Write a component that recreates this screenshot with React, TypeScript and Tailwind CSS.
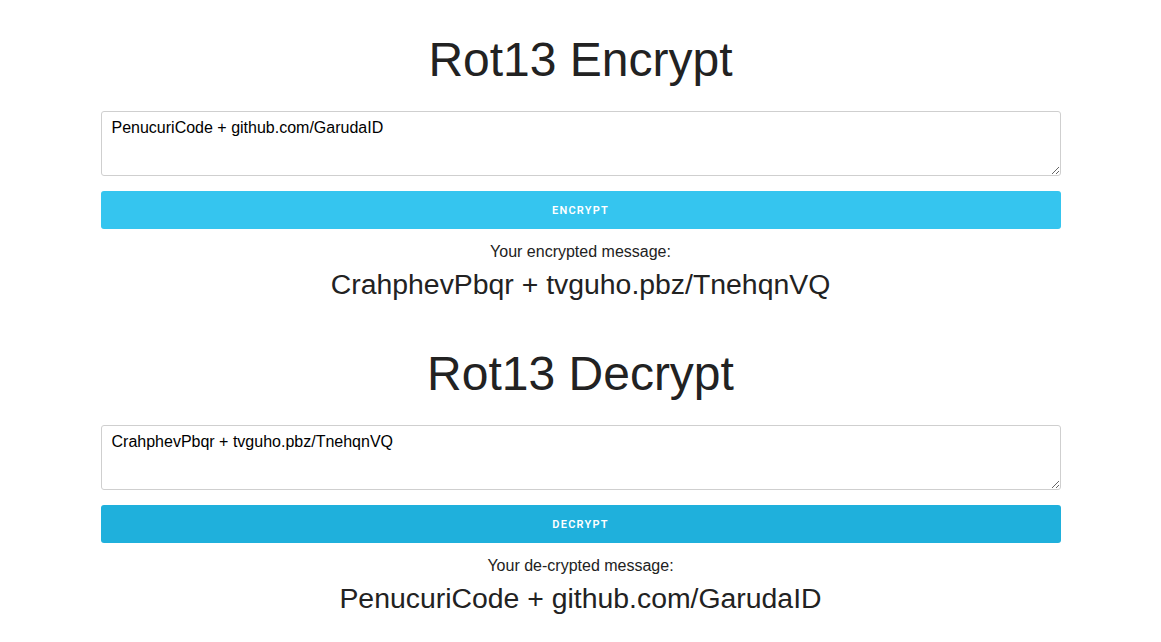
import React, { useState } from 'react';

function rot13(s: string) {
  return s.replace(/[a-zA-Z]/g, (c) => {
    const base = c <= 'Z' ? 65 : 97;
    return String.fromCharCode(((c.charCodeAt(0) - base + 13) % 26) + base);
  });
}

function Section({
  title,
  initial,
  button,
  label,
  btnClass,
}: {
  title: string;
  initial: string;
  button: string;
  label: string;
  btnClass: string;
}) {
  const [text, setText] = useState(initial);
  const [result, setResult] = useState(rot13(initial));

  return (
    <section className="flex flex-col">
      <h1 className="text-center text-[48px] leading-[54px] text-[#222]">{title}</h1>
      <textarea
        className="mt-[24px] h-[65px] w-full rounded-[3px] border border-[#cfcfcf] bg-white px-[10px] pt-[4px] pb-[6px] text-[16px] text-black outline-none"
        value={text}
        onChange={(e) => setText(e.target.value)}
      />
      <button
        type="button"
        className={`mt-[15px] h-[38px] w-full rounded-[3px] pt-[3px] font-['Roboto',sans-serif] text-[11px] font-semibold uppercase tracking-[1.2px] text-white ${btnClass}`}
        onClick={() => setResult(rot13(text))}
      >
        {button}
      </button>
      <div className="mt-[11px] text-center text-[16px] leading-[24px] text-[#222]">{label}</div>
      <div className="mt-[3px] text-center text-[28.4px] leading-[34px] text-[#222]">{result}</div>
    </section>
  );
}

export default function App() {
  return (
    <div className="min-h-screen bg-white font-['Liberation_Sans',Arial,sans-serif]">
      <div className="mx-auto flex w-[960px] flex-col gap-[46px] pt-[33px]">
        <Section
          title="Rot13 Encrypt"
          initial="PenucuriCode + github.com/GarudaID"
          button="Encrypt"
          label="Your encrypted message:"
          btnClass="bg-[#35c5ef]"
        />
        <Section
          title="Rot13 Decrypt"
          initial="CrahphevPbqr + tvguho.pbz/TnehqnVQ"
          button="Decrypt"
          label="Your de-crypted message:"
          btnClass="bg-[#1fb0dc]"
        />
      </div>
    </div>
  );
}
